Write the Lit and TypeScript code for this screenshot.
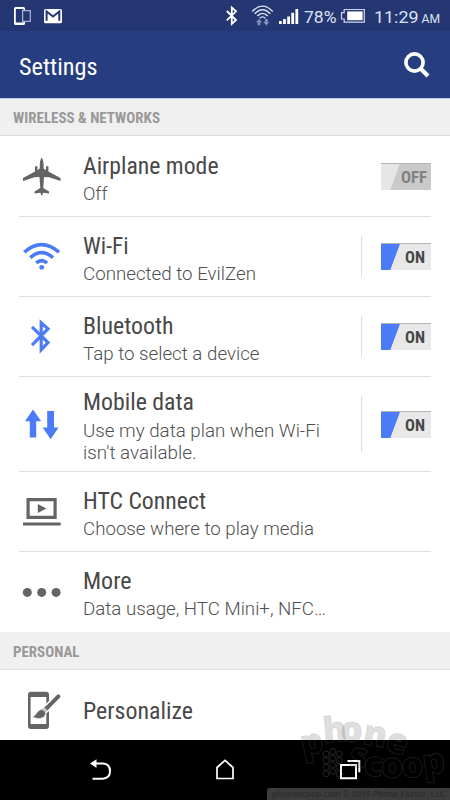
import { LitElement, html, svg, css, nothing } from "lit";
import { customElement, property } from "lit/decorators.js";

/** One line of condensed text, fitted to a given advance width. */
@customElement("fit-text")
class FitText extends LitElement {
  @property() text = "";
  @property({ type: Number }) width = 100;
  @property({ type: Number }) height = 28;
  @property({ type: Number }) baseline = 21;
  static styles = css`
    :host { display: block; }
    svg { display: block; overflow: visible; }
    text { fill: currentColor; }
  `;
  render() {
    return html`<svg width=${this.width} height=${this.height}>
      <text x="0" y=${this.baseline} textLength=${this.width} lengthAdjust="spacingAndGlyphs">${this.text}</text>
    </svg>`;
  }
}

@customElement("toggle-switch")
class ToggleSwitch extends LitElement {
  @property({ type: Boolean, reflect: true }) on = false;
  static styles = css`
    :host { display: block; width: 50px; height: 27px; font: 700 16px Roboto, sans-serif; font-stretch: 75%; color: #828282; }
    :host([on]) { color: #484848; }
    .track { display: flex; align-items: center; justify-content: flex-end; box-sizing: border-box; height: 27px;
      padding-right: 4.5px; border-top: 1px solid #b5b5b5; background: linear-gradient(110.5deg, #e6e6e6 0 17.4px, #c9c9c9 18.1px); }
    :host([on]) .track { padding-right: 6.5px; background: linear-gradient(110.5deg, #4c7bf8 0 17.4px, #e8e8e8 18.1px); }
  `;
  render() {
    return html`<div class="track">
      <fit-text .text=${this.on ? "ON" : "OFF"} .width=${this.on ? 20 : 26} .height=${20} .baseline=${16}></fit-text>
    </div>`;
  }
}

const icons: Record<string, unknown> = {
  plane: svg`<path fill="#646464" d="M21.7 1.5C22.8 2.8 23.4 5 23.6 8.2V12.4L26 14V10.3H28.4V15.6L40.5 22V24.9L29 21.2L24 21L23.3 32L29 35.6V37.6L23.2 36.7L22 39.5H21.4L20.4 36.7L14.6 37.6V35.6L20.3 32L19.5 21L14.4 21.2L3 24.9V22L15 15.6V10.3H17.4V14L19.8 12.4V8.2C20 5 20.6 2.8 21.7 1.5Z"/>`,
  wifi: svg`<g fill="none" stroke="#4c7bf8" stroke-width="3.6"><path d="M4.3 16.2Q21.5 1.2 39 16.2M10.3 21.7Q21.5 11.7 33 21.7M16.2 27Q21.6 22.2 27.1 27"/></g><circle cx="21.7" cy="31.3" r="2.4" fill="#4c7bf8"/>`,
  bluetooth: svg`<path fill="none" stroke="#4c7bf8" stroke-width="3.2" d="M12 10.8L28 26.6L21.2 33.8V6.8L28 12.8L12 29.2"/>`,
  data: svg`<path fill="#4c7bf8" d="M13 5.4L21.2 17.3H16.2V33.5H9.8V17.3H5ZM27.2 7H34V23.5H38.6L30.7 35.3L22.6 23.5H27.2Z"/>`,
  media: svg`<path fill="none" stroke="#646464" stroke-width="3.2" d="M8.1 8.7H35.1V26.3H8.1ZM3 33H40.7"/><path fill="#646464" d="M17.8 13L26.4 17.5L17.8 22Z"/>`,
  more: svg`<g fill="#646464"><circle cx="7.3" cy="20.4" r="4.5"/><circle cx="21.7" cy="20.4" r="4.5"/><circle cx="36.1" cy="20.4" r="4.5"/></g>`,
  personalize: svg`<path fill="#646464" fill-rule="evenodd" d="M11 1.7H26.2Q29 1.7 29 4.7V36Q29 39 26.2 39H11Q8 39 8 36V4.7Q8 1.7 11 1.7ZM10.6 7V34H26.3V7Z"/><path stroke="#fff" stroke-width="7" stroke-linecap="round" d="M38.5 6.3L25.5 19.5"/><path stroke="#646464" stroke-width="4" stroke-linecap="round" d="M38.4 6.3L27.5 17.3"/><path stroke="#646464" stroke-width="4.4" d="M27.8 17L25.9 19"/><path stroke="#bbb" stroke-width="5" d="M25.4 19.3L23.9 20.8"/><path fill="#646464" stroke="#fff" stroke-width=".5" d="M20.5 19.8C22.6 18.9 26 21.5 25.5 24C24.7 28.5 18 30 12.5 26.7C15.9 26 16 21.8 20.5 19.8Z"/>`,
};

type Line = [text: string, width: number];
interface Item { icon: string; title: Line; lines: Line[]; size: string; toggle?: "on" | "off" }

const wireless: Item[] = [
  { icon: "plane", title: ["Airplane mode", 135.5], lines: [["Off", 24.5]], size: "", toggle: "off" },
  { icon: "wifi", title: ["Wi-Fi", 45.5], lines: [["Connected to EvilZen", 173]], size: "", toggle: "on" },
  { icon: "bluetooth", title: ["Bluetooth", 90.5], lines: [["Tap to select a device", 176.5]], size: "", toggle: "on" },
  { icon: "data", title: ["Mobile data", 111], lines: [["Use my data plan when Wi-Fi", 237], ["isn't available.", 113.5]], size: "tall", toggle: "on" },
  { icon: "media", title: ["HTC Connect", 123], lines: [["Choose where to play media", 231]], size: "" },
  { icon: "more", title: ["More", 48.5], lines: [["Data usage, HTC Mini+, NFC…", 243]], size: "" },
];
const personal: Item[] = [{ icon: "personalize", title: ["Personalize", 110], lines: [], size: "single" }];

@customElement("app-root")
class AppRoot extends LitElement {
  static styles = css`
    :host { display: flex; flex-direction: column; position: relative; width: 450px; height: 800px; overflow: hidden;
      background: #fff; font-family: Roboto, sans-serif; color: #484848; }
    svg { display: block; }
    .status { flex: none; height: 31px; background: #243773; }
    .status text { fill: #dde3f2; font-size: 17px; }
    .status .small { font-size: 12.5px; }
    .bar { flex: none; display: flex; justify-content: space-between; box-sizing: border-box; height: 68px; padding: 14px 19px 0 19px;
      background: #263e80; border-bottom: 1px solid #c4cae0; color: #fff; font-size: 24px; font-stretch: 75%; }
    .section { flex: none; box-sizing: border-box; height: 37px; padding: 9px 12.5px 0; background: #f0f0f0;
      border-bottom: 1px solid #dcdcdc; color: #999; font-size: 15px; font-weight: 700; font-stretch: 75%; }
    .section.second { height: 38px; padding-top: 10px; }
    .row { flex: none; display: flex; box-sizing: border-box; height: 80px; margin: 0 19px; border-bottom: 1px solid #dfdfdf; }
    .row.first { height: 81px; }
    .row.tall { height: 95px; }
    .row.single, .row.last { border-bottom: none; }
    .row.single { height: 70px; }
    .icon { align-self: center; width: 45px; height: 41px; flex: none; margin: 0 -1px 0 1px; }
    .single .icon { align-self: flex-start; margin-top: 20px; }
    .copy { flex: 1; padding: 14.5px 0 0 19px; }
    .first .copy { padding-top: 15.5px; }
    .tall .copy { padding-top: 11px; }
    .single .copy { padding-top: 27px; }
    .title { font-size: 24px; font-stretch: 75%; }
    .detail { font-size: 18.7px; font-weight: 300; color: #4f4f4f; }
    .control { flex: none; align-self: center; display: flex; align-items: center; box-sizing: border-box; height: 41px; width: 70px; padding-left: 20px; }
    .control.on { width: 70px; padding-left: 19px; border-left: 1px solid #dedede; }
    .tall .control { height: 56px; }
    .nav { flex: none; height: 60px; background: #000; margin-top: auto; }
    .mark { position: absolute; right: 0; bottom: 0; overflow: visible; }
    .brand { font-family: "Open Sans", sans-serif; font-size: 35px; font-weight: 800; fill: #000; fill-opacity: .13; stroke: #808080; stroke-opacity: .2; }
    .dots { fill: none; stroke: #808080; stroke-opacity: .27; }
    .legal { font-family: "Open Sans", sans-serif; font-size: 8px; font-weight: 700; fill: #2f2f2f; }
  `;

  private section(name: string, width: number, cls = "") {
    return html`<div class="section ${cls}"><fit-text .text=${name} .width=${width} .height=${18} .baseline=${15}></fit-text></div>`;
  }

  private row(item: Item, first: boolean, last: boolean) {
    return html`<div class="row ${item.size} ${first ? "first" : ""} ${last ? "last" : ""}">
      <svg class="icon" viewBox="0 0 45 41">${icons[item.icon]}</svg>
      <div class="copy">
        <fit-text class="title" .text=${item.title[0]} .width=${item.title[1]} .height=${28.5} .baseline=${21.5}></fit-text>
        ${item.lines.map(([t, w]) => html`<fit-text class="detail" .text=${t} .width=${w} .height=${22} .baseline=${20}></fit-text>`)}
      </div>
      ${item.toggle
        ? html`<div class="control ${item.toggle}"><toggle-switch ?on=${item.toggle === "on"}></toggle-switch></div>`
        : nothing}
    </div>`;
  }

  private statusBar() {
    return html`<svg class="status" width="450" height="31">
      <path fill="#fff" fill-rule="evenodd" d="M15.5 7H23.5Q25 7 25 8.5V23.5Q25 25 23.5 25H15.5Q14 25 14 23.5V8.5Q14 7 15.5 7ZM15.8 9V22.6H23.4V9Z"/>
      <path fill="#243773" stroke="#a9b3d3" stroke-width="1.2" d="M22.6 10.6H30.3V21.4H22.6Z"/>
      <rect x="44" y="9" width="18" height="14.3" rx="1.5" fill="#fff"/>
      <path fill="none" stroke="#243773" stroke-width="2" d="M46.6 20.8V11.5L53 16.5L59.3 11.5V20.8"/>
      <path fill="none" stroke="#fff" stroke-width="1.8" d="M226.8 11L236 20L231.8 24V7.6L236 11.4L226.8 20.4"/>
      <g fill="none" stroke="#dce2f1" stroke-width="1.4">
        <path d="M252.2 11.5Q262.5 .8 272.8 11.5M254.7 13.8Q262.5 5.7 270.3 13.8M257.2 16.1Q262.5 10.6 267.8 16.1M259.7 18.3Q262.5 15.4 265.3 18.3"/>
      </g>
      <path fill="#8390bb" d="M259 18.8L262 22.2H260.4V25.3H257.6V22.2H256ZM264.9 19H267.7V22H269.3L266.3 25.5L263.3 22H264.9Z"/>
      <path fill="#fff" d="M279 21H281.8V24H279ZM283.1 19H285.9V24H283.1ZM287.2 16.4H290V24H287.2ZM291.3 12.7H294.1V24H291.3ZM295.4 9H298.2V24H295.4Z"/>
      <text x="304" y="22.5" textLength="32.5" lengthAdjust="spacingAndGlyphs">78%</text>
      <path fill="none" stroke="#cfd6ea" stroke-width="1.2" d="M344.2 9.5H364.3V22.2H344.2V19H341.5V12.7H344.2Z"/>
      <rect x="347.2" y="11.4" width="15.4" height="8.8" fill="#fff"/>
      <text x="374" y="22.5" textLength="44.5" lengthAdjust="spacingAndGlyphs">11:29</text>
      <text class="small" x="421.5" y="22.5" textLength="18.5" lengthAdjust="spacingAndGlyphs">AM</text>
    </svg>`;
  }

  private watermark() {
    const dots = [];
    for (let c = 0; c < 3; c++) for (let r = 0; r < 4; r++) {
      dots.push(svg`<circle cx=${36 + c * 6.6} cy=${(c === 1 ? 41.5 : 44) + r * 6.6} r="3"/>`);
    }
    return html`<svg class="mark" width="160" height="90" viewBox="0 0 160 90">
      <g class="dots">${dots}</g>
      <text class="brand" x="13 34 50 72 94" y="46 33 31 34 40" rotate="-12 -5 3 9 16">phone</text>
      <text class="brand" x="58 73 91 112 134" y="56 65 68 68 65" rotate="10 6 0 -4 -8">scoop</text>
    </svg>
    <svg class="mark" width="183" height="12">
      <path fill="#3d3d3d" d="M0 12V3Q0 0 3 0H183V12Z"/>
      <text class="legal" x="5" y="9" textLength="173" lengthAdjust="spacingAndGlyphs">phonescoop.com © 2015 Phone Factor, LLC</text>
    </svg>`;
  }

  render() {
    return html`
      ${this.statusBar()}
      <div class="bar">
        <fit-text .text=${"Settings"} .width=${78.5} .height=${40} .baseline=${29.5}></fit-text>
        <svg width="30" height="40"><g fill="none" stroke="#fff" stroke-width="3.6"><circle cx="13.5" cy="17.5" r="8.6"/><path d="M19.5 23.5L27 31" stroke-width="4.2"/></g></svg>
      </div>
      ${this.section("WIRELESS & NETWORKS", 147)}
      ${wireless.map((item, i) => this.row(item, i === 0, i === wireless.length - 1))}
      ${this.section("PERSONAL", 66.5, "second")}
      ${personal.map((item) => this.row(item, false, true))}
      <svg class="nav" width="450" height="60">
        <g fill="none" stroke="#fff" stroke-width="2">
          <path d="M93 23.6H103Q110 24 110 31.3Q110 38 103 38.7H92.5"/><path fill="#fff" stroke="none" d="M90 23.6L96.5 19.3V28Z"/>
          <path d="M225 20.3L233 27.5V38.5H217V27.5Z" stroke-width="1.7"/>
          <path d="M341 25H356V38.3H341ZM347.5 21H359.3V32.3"/>
        </g>
      </svg>
      ${this.watermark()}
    `;
  }
}
